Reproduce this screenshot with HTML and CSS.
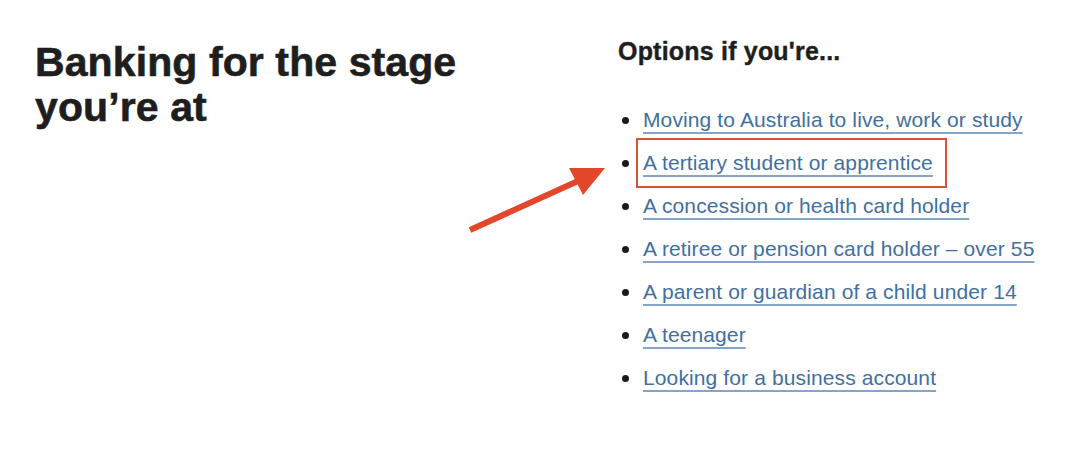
FILE: index.html
```html
<!DOCTYPE html>
<html lang="en">
<head>
    <meta charset="UTF-8">
    <meta name="viewport" content="width=device-width, initial-scale=1.0">
    <title>Banking for the stage you're at</title>
    <link rel="stylesheet" href="styles.css">
</head>
<body>
    <div class="page">
        <!-- left title -->
        <h1 class="title">Banking for the stage you’re at</h1>
        <!-- options list -->
        <div class="options">
            <h2>Options if you're...</h2>
            <ul>
                <li><a href="#">Moving to Australia to live, work or study</a></li>
                <li><a href="#" class="marked">A tertiary student or apprentice</a></li>
                <li><a href="#">A concession or health card holder</a></li>
                <li><a href="#">A retiree or pension card holder – over 55</a></li>
                <li><a href="#">A parent or guardian of a child under 14</a></li>
                <li><a href="#">A teenager</a></li>
                <li><a href="#">Looking for a business account</a></li>
            </ul>
        </div>
        <!-- annotation arrow -->
        <svg class="arrow" width="150" height="80" viewBox="465 160 150 80">
            <line x1="470" y1="230" x2="578" y2="181" stroke="#e2462b" stroke-width="6"/>
            <polygon points="605,168 569,168 583,195" fill="#e2462b"/>
        </svg>
    </div>
</body>
</html>
```

FILE: styles.css
```css
*{
    margin: 0;
    padding: 0;
}
body{
    background: #fff;
    font-family: "Liberation Sans", Arial, sans-serif;
    color: #1e1e1e;
}
.page{
    position: relative;
    display: grid;
    grid-template-columns: 583px 1fr;
    padding: 40px 0 0 35px;
    height: 419px;
}
.title{
    font-size: 41px;
    line-height: 45px;
    font-weight: bold;
    letter-spacing: 0.1px;
    -webkit-text-stroke: 0.6px #1e1e1e;
    width: 440px;
}
.options h2{
    font-size: 25px;
    line-height: 30px;
    font-weight: bold;
    letter-spacing: 0.2px;
    -webkit-text-stroke: 0.4px #1e1e1e;
    margin-top: -4px;
}
.options ul{
    list-style: none;
    margin-top: 32px;
}
.options li{
    position: relative;
    font-size: 21px;
    line-height: 43px;
    letter-spacing: 0.12px;
    padding-left: 25px;
}
.options li::before{
    content: "";
    position: absolute;
    left: 4px;
    top: 19px;
    width: 7px;
    height: 7px;
    border-radius: 50%;
    background: #1a1a1a;
}
.options a{
    color: #41709f;
    text-decoration: underline;
    text-decoration-color: #84a4c9;
    text-decoration-thickness: 2px;
    text-underline-offset: 5px;
}
.marked{
    position: relative;
}
.marked::after{
    content: "";
    position: absolute;
    left: -7px;
    right: -14px;
    top: -13px;
    bottom: -14px;
    border: 2.5px solid #d6533a;
}
.arrow{
    position: absolute;
    left: 465px;
    top: 160px;
}
```
